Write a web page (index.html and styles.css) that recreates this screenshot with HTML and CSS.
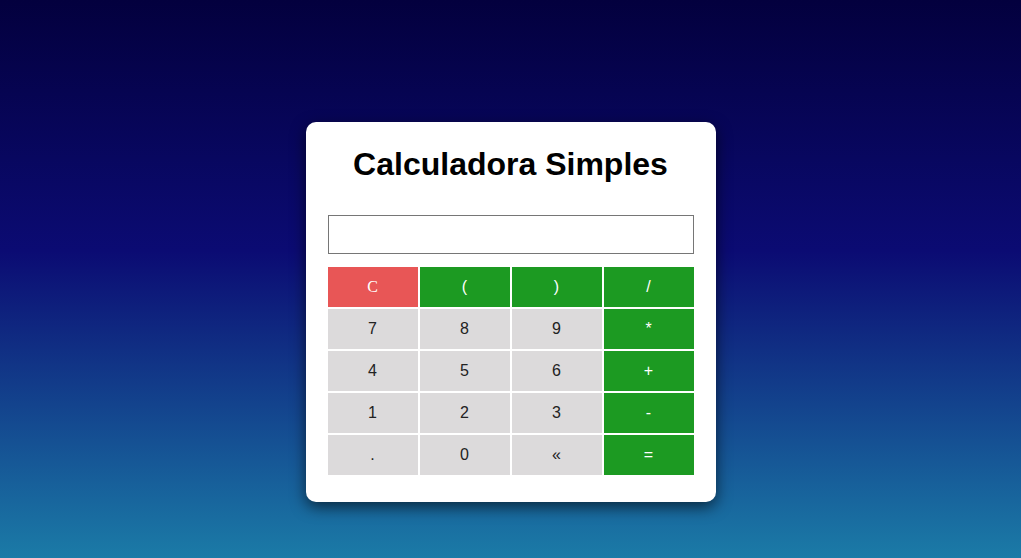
FILE: index.html
```html
<!DOCTYPE html>
<html lang="pt">
<head>
<meta charset="utf-8">
<title>Calculadora Simples</title>
<link rel="stylesheet" href="styles.css">
</head>
<body>
<div class="calc">
  <h1 class="title">Calculadora Simples</h1>
  <input class="display" type="text">
  <div class="keys">
    <button class="key clear">C</button>
    <button class="key op">(</button>
    <button class="key op">)</button>
    <button class="key op">/</button>
    <button class="key">7</button>
    <button class="key">8</button>
    <button class="key">9</button>
    <button class="key op">*</button>
    <button class="key">4</button>
    <button class="key">5</button>
    <button class="key">6</button>
    <button class="key op">+</button>
    <button class="key">1</button>
    <button class="key">2</button>
    <button class="key">3</button>
    <button class="key op">-</button>
    <button class="key">.</button>
    <button class="key">0</button>
    <button class="key">&laquo;</button>
    <button class="key op">=</button>
  </div>
</div>
</body>
</html>
```
FILE: styles.css
```css
html, body {
  margin: 0;
  height: 100%;
}
body {
  background: linear-gradient(to bottom, #03003e 0%, #0b0b73 45%, #1b7ba7 100%);
  font-family: "Liberation Sans", Arial, sans-serif;
  display: flex;
  justify-content: center;
  align-items: flex-start;
  padding-top: 122px;
  box-sizing: border-box;
}
.calc {
  width: 410px;
  box-sizing: border-box;
  background: #fff;
  border-radius: 10px;
  box-shadow: 0 5px 15px rgba(0, 0, 0, 0.6);
  padding: 24px 22px 27px;
  display: flex;
  flex-direction: column;
}
.title {
  margin: 0 0 32px;
  font-size: 32px;
  line-height: 37px;
  font-weight: bold;
  text-align: center;
  color: #000;
}
.display {
  height: 39px;
  box-sizing: border-box;
  border: 1px solid #767676;
  margin: 0 0 13px;
  padding: 0 6px;
  font-size: 18px;
  font-family: "Liberation Sans", Arial, sans-serif;
  width: 100%;
}
.keys {
  display: grid;
  grid-template-columns: repeat(4, 1fr);
  grid-auto-rows: 40px;
  gap: 2px;
}
.key {
  border: none;
  margin: 0;
  padding: 0;
  background: #dcdadb;
  color: #222;
  font-family: "Liberation Sans", Arial, sans-serif;
  font-size: 16px;
}
.key.op {
  background: #1c9a22;
  color: #fff;
}
.key.clear {
  background: #e85656;
  color: #fff;
  font-family: "Liberation Serif", "Times New Roman", serif;
}
```
